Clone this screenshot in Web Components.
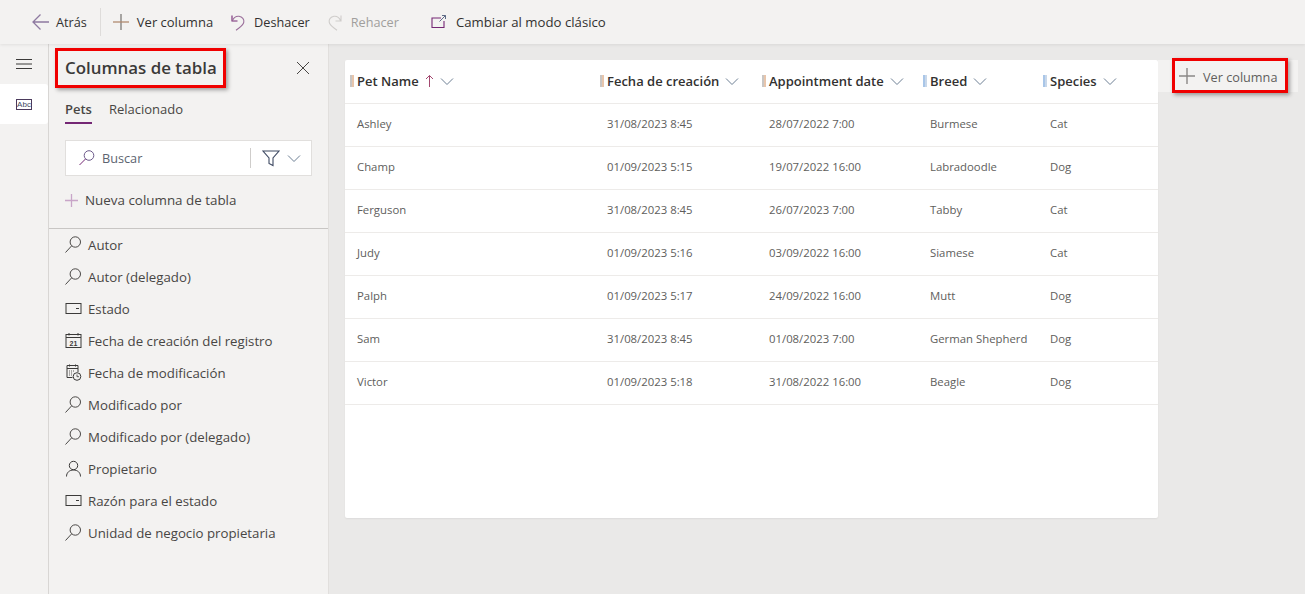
<!DOCTYPE html>
<html lang="es">
<head>
<meta charset="utf-8">
<title>Columnas de tabla</title>
<style>
html, body { margin: 0; height: 100%; overflow: hidden; }
body { font-family: "Open Sans", "Noto Sans", sans-serif; background: #eae9e8; }
</style>
</head>
<body>
<app-shell>
	<app-toolbar slot="top">
		<tool-button icon="back">Atrás</tool-button>
		<tool-button icon="plus" divider style="font-size:13px">Ver columna</tool-button>
		<tool-button icon="undo">Deshacer</tool-button>
		<tool-button icon="redo" disabled>Rehacer</tool-button>
		<tool-button icon="switch" wide style="font-size:13.2px">Cambiar al modo clásico</tool-button>
	</app-toolbar>
	<side-rail slot="rail"></side-rail>
	<columns-panel slot="panel">
		<field-row icon="lookup">Autor</field-row>
		<field-row icon="lookup">Autor (delegado)</field-row>
		<field-row icon="choice">Estado</field-row>
		<field-row icon="calendar">Fecha de creación del registro</field-row>
		<field-row icon="calclock">Fecha de modificación</field-row>
		<field-row icon="lookup">Modificado por</field-row>
		<field-row icon="lookup">Modificado por (delegado)</field-row>
		<field-row icon="person">Propietario</field-row>
		<field-row icon="choice">Razón para el estado</field-row>
		<field-row icon="lookup">Unidad de negocio propietaria</field-row>
	</columns-panel>
	<main-area slot="main">
		<data-grid>
			<grid-row head>
				<span bar="o" sorted>Pet Name</span>
				<span bar="o">Fecha de creación</span>
				<span bar="o">Appointment date</span>
				<span bar="b">Breed</span>
				<span bar="b">Species</span>
			</grid-row>
			<grid-row><span>Ashley</span><span>31/08/2023 8:45</span><span>28/07/2022 7:00</span><span>Burmese</span><span>Cat</span></grid-row>
			<grid-row><span>Champ</span><span>01/09/2023 5:15</span><span>19/07/2022 16:00</span><span>Labradoodle</span><span>Dog</span></grid-row>
			<grid-row><span>Ferguson</span><span>31/08/2023 8:45</span><span>26/07/2023 7:00</span><span>Tabby</span><span>Cat</span></grid-row>
			<grid-row><span>Judy</span><span>01/09/2023 5:16</span><span>03/09/2022 16:00</span><span>Siamese</span><span>Cat</span></grid-row>
			<grid-row><span>Palph</span><span>01/09/2023 5:17</span><span>24/09/2022 16:00</span><span>Mutt</span><span>Dog</span></grid-row>
			<grid-row><span>Sam</span><span>31/08/2023 8:45</span><span>01/08/2023 7:00</span><span>German Shepherd</span><span>Dog</span></grid-row>
			<grid-row><span>Victor</span><span>01/09/2023 5:18</span><span>31/08/2022 16:00</span><span>Beagle</span><span>Dog</span></grid-row>
		</data-grid>
		<add-column></add-column>
	</main-area>
</app-shell>

<script>
const ICONS = {
	back: `<svg width="20" height="20" viewBox="0 0 20 20" fill="none"><path d="M18 10H2.500M9.500 2.500L2 10l7.500 7.500" stroke="#8e7aa0" stroke-width="1.300"/></svg>`,
	plus: `<svg width="20" height="20" viewBox="0 0 20 20" fill="none"><path d="M10 2v16" stroke="#7d7a78" stroke-width="1.300"/><path d="M2 10h16" stroke="#b08a70" stroke-width="1.300"/></svg>`,
	undo: `<svg width="18" height="20" viewBox="0 0 18 20" fill="none"><path d="M3 3.500v5.500h5.500" stroke="#742774" stroke-width="1.100"/><path d="M3.500 8.500C5 5 7.500 4 10 4.300c3.400.5 5.300 3.100 4.800 5.900-.4 2.400-2.400 4.100-4.800 5.800l-3 2.200" stroke="#9b6f9b" stroke-width="1.100"/></svg>`,
	redo: `<svg width="18" height="20" viewBox="0 0 18 20" fill="none"><path d="M15 3.500v5.500H9.500M14.500 8.500C13 5 10.500 4 8 4.300c-3.400.5-5.300 3.100-4.800 5.900.4 2.400 2.400 4.100 4.800 5.800l3 2.200" stroke="#cfcdcb" stroke-width="1.100"/></svg>`,
	switch: `<svg width="16" height="16" viewBox="0 0 16 16" fill="none"><path d="M10 4H1v9.500h12V7" stroke="#742774" stroke-width="1.100"/><path d="M8.500 7.500L14.500 1.500M11 1.500h3.500V5" stroke="#5e6b87" stroke-width="1"/></svg>`,
	lookup: `<svg width="18" height="18" viewBox="0 0 18 18" fill="none"><circle cx="10.300" cy="6" r="5.200" stroke="#4a4846" stroke-width="1"/><path d="M6.700 9.800L.5 16.500" stroke="#4a4846" stroke-width="1"/></svg>`,
	choice: `<svg width="17" height="18" viewBox="0 0 17 18" fill="none"><rect x=".5" y="3.500" width="15" height="10" stroke="#3b3a39"/><path d="M10.500 8.500h3" stroke="#3b3a39"/></svg>`,
	calendar: `<svg width="17" height="18" viewBox="0 0 17 18" fill="none"><rect x=".5" y="2.500" width="15" height="13" stroke="#3b3a39"/><path d="M.5 5.500h15M3.500 1v2.500M12.500 1v2.500" stroke="#3b3a39"/><text x="8" y="13.500" font-size="7" font-weight="700" text-anchor="middle" fill="#3b3a39" font-family="Liberation Sans">21</text></svg>`,
	calclock: `<svg width="17" height="18" viewBox="0 0 17 18" fill="none"><path d="M7 13.500H1.500v-12h11V8" stroke="#3b3a39"/><path d="M1.500 4.500h11M4 .5v2M10 .5v2" stroke="#3b3a39"/><path d="M3.500 7h6M3.500 9h4M3.500 11h3" stroke="#605e5c" stroke-dasharray="1 1"/><circle cx="11.500" cy="12.500" r="3.800" fill="#f3f2f1" stroke="#3b3a39"/><path d="M11.500 10.500v2.200h2" stroke="#3b3a39" stroke-width=".8"/></svg>`,
	person: `<svg width="18" height="18" viewBox="0 0 18 18" fill="none"><circle cx="8.500" cy="5.500" r="4.200" stroke="#3b3a39"/><path d="M1.500 16.500c0-4 3-6.500 7-6.500s7 2.500 7 6.500" stroke="#3b3a39"/></svg>`,
	chevron: `<svg width="14" height="14" viewBox="0 0 14 14" fill="none"><path d="M1 4.500L7 10.500l6-6" stroke="#6d7f94" stroke-width="1"/></svg>`
};

class AppShell extends HTMLElement {
	constructor() {
		super();
		this.attachShadow({mode: 'open'});
		this.shadowRoot.innerHTML = `
			<style>
				:host { display: grid; grid-template: 44px 1fr / 49px 280px 1fr; grid-template-areas: "top top top" "rail panel main"; height: 594px; }
				::slotted([slot=top]) { grid-area: top; }
				::slotted([slot=rail]) { grid-area: rail; }
				::slotted([slot=panel]) { grid-area: panel; }
				::slotted([slot=main]) { grid-area: main; }
			</style>
			<slot name="top"></slot><slot name="rail"></slot><slot name="panel"></slot><slot name="main"></slot>`;
	}
}

class AppToolbar extends HTMLElement {
	constructor() {
		super();
		this.attachShadow({mode: 'open'});
		this.shadowRoot.innerHTML = `
			<style>
				:host { display: flex; align-items: center; height: 44px; padding-left: 31px; background: #f3f2f1; box-shadow: 0 1px 3px rgba(0,0,0,.08); position: relative; z-index: 2; }
			</style>
			<slot></slot>`;
	}
}

class ToolButton extends HTMLElement {
	constructor() {
		super();
		this.attachShadow({mode: 'open'});
	}
	connectedCallback() {
		const icon = this.getAttribute('icon');
		this.shadowRoot.innerHTML = `
			<style>
				:host { display: flex; align-items: center; gap: 7px; height: 28px; font-size: 12.700px; color: #323130; margin-right: 16px; white-space: nowrap; }
				:host([icon=back]) { gap: 5px; }
				:host([divider]) { border-left: 1px solid #dedcda; margin-left: -3px; padding-left: 10px; gap: 6px; }
				:host([disabled]) { color: #a19f9d; }
				:host([wide]) { margin-left: 16px; gap: 9px; }
				svg { display: block; }
			</style>
			${ICONS[icon]}<slot></slot>`;
	}
}

class SideRail extends HTMLElement {
	constructor() {
		super();
		this.attachShadow({mode: 'open'});
		this.shadowRoot.innerHTML = `
			<style>
				:host { display: block; background: #f3f2f1; border-right: 1px solid #d8d6d4; box-sizing: border-box; }
				.menu { height: 40px; display: flex; align-items: center; justify-content: center; }
				.abc { height: 40px; width: 48px; background: #fff; border-radius: 0 3px 3px 0; display: flex; align-items: center; justify-content: center; }
				.abc span { box-sizing: border-box; width: 16px; height: 11px; border: 1px solid #4b3a5c; font: 8px/9px "Liberation Sans", sans-serif; color: #3f4a63; text-align: center; }
			</style>
			<div class="menu"><svg width="16" height="12" viewBox="0 0 16 12"><path d="M0 1.500h16M0 6h16M0 10.500h16" stroke="#3b3a39"/></svg></div>
			<div class="abc"><span>Abc</span></div>`;
	}
}

class ColumnsPanel extends HTMLElement {
	constructor() {
		super();
		this.attachShadow({mode: 'open'});
		this.shadowRoot.innerHTML = `
			<style>
				:host { display: block; background: #f3f2f1; border-right: 1px solid #e1dfdd; box-sizing: border-box; color: #323130; position: relative; }
				.title { display: flex; align-items: center; justify-content: space-between; box-sizing: border-box; height: 48px; padding: 0 18px 2px 16px; font-size: 16.900px; font-weight: 600; color: #3b3a39; }
				.title svg { margin-top: 2px; }
				.tabs { display: flex; gap: 17px; padding-left: 16px; height: 32px; font-size: 13px; color: #484644; }
				.tab { line-height: 35px; height: 32px; box-sizing: border-box; }
				.tab.on { font-weight: 600; border-bottom: 2px solid #742774; }
				.search { display: flex; align-items: center; box-sizing: border-box; margin: 16px 16px 0; height: 36px; background: #fff; border: 1px solid #e1dfdd; font-size: 12.700px; color: #5c6470; }
				.search .q { flex: 1; display: flex; align-items: center; gap: 6px; padding-left: 12px; }
				.search .f { display: flex; align-items: center; gap: 7px; height: 20px; border-left: 1px solid #cfcdcb; padding: 0 10px 0 11px; }
				.new { display: flex; align-items: center; gap: 7px; padding: 0 0 4px 16px; height: 53px; box-sizing: border-box; font-size: 13.400px; color: #484644; border-bottom: 1px solid #c8c6c4; }
				.mark { position: absolute; left: 6px; top: 4px; width: 171px; height: 40px; box-sizing: border-box; border: 3px solid #f00000; box-shadow: 2px 2px 4px rgba(0,0,0,.35); pointer-events: none; }
			</style>
			<div class="title"><span>Columnas de tabla</span>
				<svg width="14" height="14" viewBox="0 0 14 14"><path d="M1 1l12 12M13 1L1 13" stroke="#484644" stroke-width="1"/></svg></div>
			<div class="mark"></div>
			<div class="tabs"><div class="tab on">Pets</div><div class="tab">Relacionado</div></div>
			<div class="search">
				<div class="q"><svg width="18" height="18" viewBox="0 0 18 18" fill="none"><circle cx="11" cy="6.500" r="4.800" stroke="#6c5a8a"/><path d="M7.600 9.900L1.500 16" stroke="#742774"/></svg>Buscar</div>
				<div class="f"><svg width="18" height="18" viewBox="0 0 18 18" fill="none"><path d="M1 2h16l-6 7v7.500l-4-2V9z" stroke="#3f4a63" stroke-width="1.100"/></svg>${ICONS.chevron}</div>
			</div>
			<div class="new"><svg width="13" height="13" viewBox="0 0 13 13"><path d="M6.500 0v13M0 6.500h13" stroke="#c8a5c8" stroke-width="1.300"/></svg>Nueva columna de tabla</div>
			<div class="list"><slot></slot></div>`;
	}
}

class FieldRow extends HTMLElement {
	constructor() {
		super();
		this.attachShadow({mode: 'open'});
	}
	connectedCallback() {
		this.shadowRoot.innerHTML = `
			<style>
				:host { display: flex; align-items: center; gap: 5px; height: 32px; padding-left: 16px; font-size: 13.250px; color: #484644; }
				svg { flex: none; width: 18px; }
			</style>
			${ICONS[this.getAttribute('icon')]}<slot></slot>`;
	}
}

class MainArea extends HTMLElement {
	constructor() {
		super();
		this.attachShadow({mode: 'open'});
		this.shadowRoot.innerHTML = `
			<style>
				:host { display: flex; align-items: flex-start; padding: 16px 0 0 16px; background: #eae9e8; min-width: 0; }
			</style>
			<slot></slot>`;
	}
}

class DataGrid extends HTMLElement {
	constructor() {
		super();
		this.attachShadow({mode: 'open'});
		this.shadowRoot.innerHTML = `
			<style>
				:host { display: block; flex: none; width: 813px; height: 458px; background: #fff; border-radius: 2px; box-shadow: 0 1px 2px rgba(0,0,0,.06); }
			</style>
			<slot></slot>`;
	}
}

class GridRow extends HTMLElement {
	constructor() {
		super();
		this.attachShadow({mode: 'open'});
	}
	connectedCallback() {
		// cells live in the light DOM, so they get rebuilt here with their bars and chevrons
		const head = this.hasAttribute('head');
		const cells = [...this.querySelectorAll('span')].map(c => {
			if (!head) return `<div class="c">${c.textContent}</div>`;
			const sort = c.hasAttribute('sorted') ? `<svg class="up" width="9" height="14" viewBox="0 0 9 14" fill="none"><path d="M4.500 13V1.500M1 5l3.500-3.500L8 5" stroke="#a3486f"/></svg>` : '';
			return `<div class="c h"><i class="${c.getAttribute('bar')}"></i><b>${c.textContent}</b>${sort}${ICONS.chevron}</div>`;
		}).join('');
		this.shadowRoot.innerHTML = `
			<style>
				:host { display: grid; grid-template-columns: 250px 162px 161px 120px 1fr; height: 43px; box-sizing: border-box; border-bottom: 1px solid #edebe9; padding: 0 0 4px 12px; align-items: center; font-size: 11.350px; color: #605e5c; }
				:host([head]) { height: 44px; padding: 0 0 2px 5px; }
				.c { white-space: nowrap; }
				.h { display: flex; align-items: center; font-size: 13px; color: #323130; }
				.h i { width: 4px; height: 12px; margin-right: 3px; }
				.h i.o { background: linear-gradient(90deg, #c9c6c4 50%, #e8c5ab 50%); }
				.h i.b { background: linear-gradient(90deg, #a9c6e8 50%, #c9d8ea 50%); }
				.h b { font-weight: 600; margin-right: 6px; }
				.h .up { margin-right: 6px; }
				svg { flex: none; }
			</style>
			${cells}`;
	}
}

class AddColumn extends HTMLElement {
	constructor() {
		super();
		this.attachShadow({mode: 'open'});
		this.shadowRoot.innerHTML = `
			<style>
				:host { display: flex; align-items: center; gap: 7px; flex: none; width: 140px; height: 32px; padding-left: 20px; box-sizing: border-box; background: #f3f2f1; font-size: 12.700px; color: #605e5c; position: relative; }
				span { padding-top: 2px; }
				.mark { position: absolute; left: 14px; top: -2px; width: 116px; height: 35px; box-sizing: border-box; border: 3px solid #f00000; box-shadow: 2px 2px 4px rgba(0,0,0,.35); }
			</style>
			<svg width="18" height="18" viewBox="0 0 18 18"><path d="M9 1v16M1 9h16" stroke="#8a8886" stroke-width="1.400"/></svg><span>Ver columna</span>
			<div class="mark"></div>`;
	}
}

customElements.define('app-shell', AppShell);
customElements.define('app-toolbar', AppToolbar);
customElements.define('tool-button', ToolButton);
customElements.define('side-rail', SideRail);
customElements.define('columns-panel', ColumnsPanel);
customElements.define('field-row', FieldRow);
customElements.define('main-area', MainArea);
customElements.define('data-grid', DataGrid);
customElements.define('grid-row', GridRow);
customElements.define('add-column', AddColumn);
</script>
</body>
</html>
